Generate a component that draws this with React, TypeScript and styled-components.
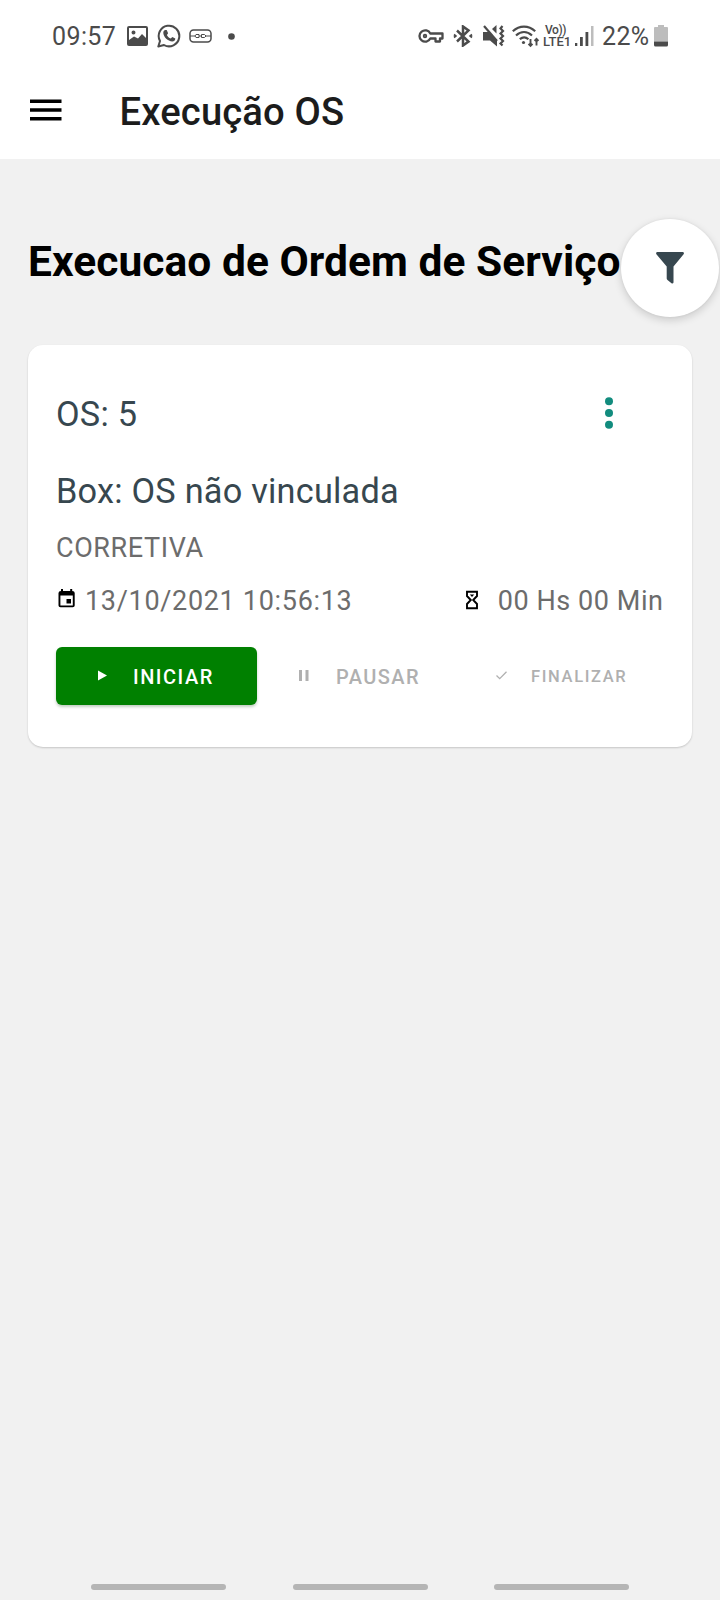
import React from "react";
import styled, { createGlobalStyle } from "styled-components";

const GlobalStyle = createGlobalStyle`
  * { box-sizing: border-box; }
  body { margin: 0; background: #f1f1f1; font-family: Roboto, "Liberation Sans", sans-serif; }
  svg { display: block; flex: none; }
  button { font: inherit; border: 0; background: none; padding: 0; margin: 0; }
`;

const Screen = styled.div`
  width: 720px;
  height: 1600px;
  display: flex;
  flex-direction: column;
  overflow: hidden;
  background: #f1f1f1;
`;

const StatusBar = styled.header`
  height: 72px;
  flex: none;
  display: flex;
  justify-content: space-between;
  align-items: center;
  padding: 0 52px 0 52px;
  background: #fff;
  color: #4b4b4b;
`;

const StatusGroup = styled.div`
  display: flex;
  align-items: center;
`;

const StatusIcon = styled.svg<{ $gap: number }>`
  margin-left: ${(p) => p.$gap}px;
  color: #4b4b4b;
`;

const StatusText = styled.span<{ $gap?: number; $spacing?: number }>`
  margin-left: ${(p) => p.$gap ?? 0}px;
  font-size: 25px;
  line-height: 30px;
  padding-top: 2px;
  letter-spacing: ${(p) => p.$spacing ?? 0}px;
`;

const VolteLabel = styled.div`
  display: flex;
  flex-direction: column;
  width: 27px;
  margin-left: 3px;
  font-size: 13px;
  font-weight: 500;
  line-height: 11px;
  white-space: nowrap;
`;

const VolteTop = styled.span`
  padding-left: 2px;
  font-size: 12px;
  letter-spacing: -0.4px;
`;

const AppBar = styled.div`
  height: 86.5px;
  flex: none;
  display: flex;
  align-items: flex-start;
  padding: 17.5px 30px 0;
  background: #fff;
`;

const MenuButton = styled.button`
  display: flex;
  height: 40px;
  align-items: center;
`;

const AppTitle = styled.h1`
  margin: 0.5px 0 0 57.5px;
  font-size: 38.2px;
  font-weight: 500;
  line-height: 44px;
  letter-spacing: 0.15px;
  color: #1c1c1c;
`;

const PageHeader = styled.div`
  height: 186.5px;
  flex: none;
  display: flex;
  align-items: flex-start;
  padding: 60.5px 0 0 28px;
`;

const PageTitle = styled.h2`
  flex: none;
  width: 593px;
  margin: 18px 0 0;
  font-size: 42.5px;
  font-weight: 700;
  line-height: 50px;
  letter-spacing: 0.05px;
  white-space: nowrap;
  color: #000;
`;

const FilterButton = styled.button`
  display: flex;
  align-items: center;
  justify-content: center;
  flex: none;
  width: 98px;
  height: 98px;
  border-radius: 50%;
  background: #fff;
  box-shadow: 0 3px 8px rgba(0, 0, 0, 0.16), 0 0 3px rgba(0, 0, 0, 0.06);
`;

const OrderCard = styled.article`
  height: 401.5px;
  flex: none;
  margin: 0 28px 0 27.5px;
  padding: 46px 28.5px 0;
  border-radius: 15px;
  background: #fff;
  box-shadow: 0 1px 2px rgba(0, 0, 0, 0.18);
`;

const CardTop = styled.div`
  display: flex;
  justify-content: space-between;
  height: 46px;
  padding-right: 51px;
`;

const CardTitle = styled.div`
  font-size: 34.300px;
  line-height: 46px;
  letter-spacing: 0.22px;
  color: #37474f;
  white-space: nowrap;
`;

const BoxTitle = styled(CardTitle)`
  margin-top: 31px;
`;

const MoreButton = styled.button`
  display: flex;
  width: 8px;
  height: 44px;
  align-items: center;
`;

const OrderKind = styled.div`
  margin-top: 18px;
  font-size: 27px;
  line-height: 32px;
  letter-spacing: 0.6px;
  color: #6c6c6c;
`;

const MetaRow = styled.div`
  display: flex;
  justify-content: space-between;
  align-items: center;
  height: 36px;
  margin-top: 19px;
`;

const MetaItem = styled.div<{ $gap: number; $spacing: number }>`
  display: flex;
  align-items: center;
  gap: ${(p) => p.$gap}px;
  font-size: 27px;
  line-height: 36px;
  letter-spacing: ${(p) => p.$spacing}px;
  color: #6c6c6c;
  white-space: nowrap;
`;

const Actions = styled.div`
  display: flex;
  margin-top: 27.5px;
  height: 58px;
`;

const ActionButton = styled.button<{ $primary?: boolean; $width: number; $pad: number; $gap: number; $size: number; $spacing: number }>`
  display: flex;
  align-items: center;
  width: ${(p) => p.$width}px;
  height: 58px;
  padding-left: ${(p) => p.$pad}px;
  gap: ${(p) => p.$gap}px;
  border-radius: 6px;
  background: ${(p) => (p.$primary ? "#008000" : "transparent")};
  box-shadow: ${(p) => (p.$primary ? "0 2px 3px rgba(0, 60, 0, 0.25)" : "none")};
  color: ${(p) => (p.$primary ? "#fff" : "#b0b0b0")};
  font-size: ${(p) => p.$size}px;
  font-weight: 500;
  letter-spacing: ${(p) => p.$spacing}px;
  white-space: nowrap;
`;

const ActionLabel = styled.span`
  padding-top: 2px;
`;

const GestureBar = styled.footer`
  display: flex;
  justify-content: center;
  gap: 66.5px;
  margin-top: auto;
  padding-bottom: 10px;
`;

const GestureHint = styled.span`
  width: 135px;
  height: 6px;
  border-radius: 3px;
  background: #b5b5b5;
`;

export default function App() {
  return (
    <>
      <GlobalStyle />
      <Screen>
        <StatusBar>
          <StatusGroup>
            <StatusText $spacing={0.4}>09:57</StatusText>
            <StatusIcon $gap={11} width="21" height="20" viewBox="0 0 21 20">
              <path fill="currentColor" fillRule="evenodd" d="M2 0h17a2 2 0 0 1 2 2v16a2 2 0 0 1-2 2H2a2 2 0 0 1-2-2V2a2 2 0 0 1 2-2zM2 2v12l5-3.500 4 2 4-4.500 4 4V2zM6.500 4.500a2 2 0 1 1 0 4 2 2 0 0 1 0-4z" />
            </StatusIcon>
            <StatusIcon $gap={9} width="24" height="24" viewBox="0 0 24 24">
              <path d="M1.300 22.500L3 17A10.300 10.300 0 1 1 7 21z" fill="none" stroke="currentColor" strokeWidth="2" strokeLinejoin="round" />
              <path fill="currentColor" d="M8 6h1.700l1.400 3.200-1.200 1.700c1 1.800 2 2.800 3.900 3.600l1.500-1.600 3 1.500c0 2-1.300 3-3 3-4.500-.4-8.700-4.400-9-8.500C6.200 7.500 7 6.500 8 6z" />
            </StatusIcon>
            <StatusIcon $gap={8} width="23" height="14" viewBox="0 0 23 14" fill="none" stroke="currentColor" strokeWidth="1.500">
              <rect x="1" y="1" width="21" height="12" rx="3.500" />
              <path d="M1 7h5M17 7h5M10 5.500H7L6 7l1 1.500h3zM12.500 5.500h3L17 7l-1.500 1.500h-3zM10 7h2.500" strokeWidth="1" />
            </StatusIcon>
            <StatusIcon $gap={16} width="7" height="7" viewBox="0 0 7 7">
              <circle cx="3.500" cy="3.500" r="3.300" fill="currentColor" />
            </StatusIcon>
          </StatusGroup>
          <StatusGroup>
            <StatusIcon $gap={0} width="26" height="14" viewBox="0 0 26 14" fill="none" stroke="currentColor" strokeWidth="2.300">
              <path d="M12.300 4.500H24.500V9.500H22V12.500H17.500V9.500H12.300A5.700 5.700 0 1 1 12.300 4.500z" strokeLinejoin="round" />
              <circle cx="7" cy="7" r="1.300" strokeWidth="1.800" />
            </StatusIcon>
            <StatusIcon $gap={9} width="20" height="22" viewBox="0 0 20 22" fill="none" stroke="currentColor" strokeWidth="2.500">
              <path d="M4 5.500L15.500 16.500 10 20.500V1.500L15.500 5.500 4 16.500" />
              <path d="M1 9.500l1.800 1.500L1 12.500M19 9.500L17.200 11l1.800 1.500" strokeWidth="1.800" />
            </StatusIcon>
            <StatusIcon $gap={10} width="22" height="22" viewBox="0 0 22 22">
              <path fill="currentColor" d="M0 7h6l8 8v6.500L7 15.500H0zM9 4l4.500-4v8.500z" />
              <path d="M1 1l13 15" stroke="currentColor" strokeWidth="2.200" />
              <path d="M19.500 1l-2 2.500 2.500 2.500-2.500 2.500 2.500 2.500-2.500 2.500 2.500 2.500-2.500 2.500 2 2" fill="none" stroke="currentColor" strokeWidth="2.200" />
            </StatusIcon>
            <StatusIcon $gap={7} width="28" height="23" viewBox="0 0 28 23" fill="none" stroke="currentColor" strokeWidth="2.200">
              <path d="M.8 6.300C7.500 0 16.500 0 23.200 6.300M4 10.500c5-4.600 11-4.600 16 0M7.800 14.200c3-2.500 5.800-2.500 8.600 0" />
              <circle cx="11.500" cy="17.500" r="1.600" fill="currentColor" stroke="none" />
              <path d="M18.500 14v7M16.500 18.800l2 2 2-2M24.500 20.500v-7M22.500 15.800l2-2 2 2" strokeWidth="1.900" />
            </StatusIcon>
            <VolteLabel>
              <VolteTop>Vo))</VolteTop>
              <span>LTE1</span>
            </VolteLabel>
            <StatusIcon $gap={5} width="19" height="20" viewBox="0 0 19 20">
              <path fill="currentColor" d="M0 17h2.300v3H0zM5 11h2.800v9H5zM10.500 6h2.800v14h-2.800z" />
              <path fill="#bdbdbd" d="M16 0h2.500v20H16z" />
            </StatusIcon>
            <StatusText $gap={8} $spacing={0.35}>22%</StatusText>
            <StatusIcon $gap={4.5} width="14" height="22" viewBox="0 0 14 22">
              <path fill="#bdbdbd" d="M4 0h6v2h3q1 0 1 1v13.500H0V3q0-1 1-1h3z" />
              <path fill="currentColor" d="M0 16.500h14V20q0 1.500-1.500 1.500h-11Q0 21.500 0 20z" />
            </StatusIcon>
          </StatusGroup>
        </StatusBar>

        <AppBar>
          <MenuButton aria-label="Menu">
            <svg width="32" height="22" viewBox="0 0 32 22">
              <path d="M0 .5h31.500v3.500H0zM0 9.200h31.500v3.500H0zM0 18h31.500v3.500H0z" />
            </svg>
          </MenuButton>
          <AppTitle>Execução OS</AppTitle>
        </AppBar>

        <PageHeader>
          <PageTitle>Execucao de Ordem de Serviço</PageTitle>
          <FilterButton aria-label="Filtrar">
            <svg width="28" height="32" viewBox="0 0 28 32">
              <path fill="#37474f" d="M1 0h26q1.500.8.6 2.300L17.500 14.500V30.500q-.5 1.400-2 .8l-4-3.300q-.8-.7-.8-1.500V14.500L.4 2.300Q-.4.800 1 0z" />
            </svg>
          </FilterButton>
        </PageHeader>

        <OrderCard>
          <CardTop>
            <CardTitle>OS: 5</CardTitle>
            <MoreButton aria-label="Mais opções">
              <svg width="8" height="32" viewBox="0 0 8 32" fill="#128c7e">
                <circle cx="4" cy="4.200" r="4" />
                <circle cx="4" cy="16" r="4" />
                <circle cx="4" cy="27.800" r="4" />
              </svg>
            </MoreButton>
          </CardTop>
          <BoxTitle>Box: OS não vinculada</BoxTitle>
          <OrderKind>CORRETIVA</OrderKind>
          <MetaRow>
            <MetaItem $gap={9} $spacing={0.68}>
              <svg width="20" height="24" viewBox="-2.500 1 20 24">
                <path fillRule="evenodd" d="M2.500 2V0h2v2h7.200V0h2v2q2.500 0 2.500 2v12.500q0 1.800-2 1.800H2q-2 0-2-1.800V4q0-2 2.500-2zM1.900 6.500v9.900h12.400V6.500zM8 10h4.500v4.500H8z" transform="translate(0 1)" />
              </svg>
              13/10/2021 10:56:13
            </MetaItem>
            <MetaItem $gap={20} $spacing={0.55}>
              <svg width="12" height="22" viewBox="0 1 12 22">
                <path d="M1 2.800h10v4.200L7.200 11 11 15v4.200H1V15l3.800-4L1 7z" fill="none" stroke="#000" strokeWidth="1.900" />
                <path d="M3.800 5.500h4.400L6 8z" />
              </svg>
              00 Hs 00 Min
            </MetaItem>
          </MetaRow>
          <Actions>
            <ActionButton $primary $width={201} $pad={42} $gap={26} $size={20} $spacing={1.5}>
              <svg width="9" height="11" viewBox="0 0 9 11"><path fill="#fff" d="M0 .5l9 5L0 10.500z" /></svg>
              <ActionLabel>INICIAR</ActionLabel>
            </ActionButton>
            <ActionButton disabled $width={197} $pad={42} $gap={27} $size={20} $spacing={1.45}>
              <svg width="10" height="11" viewBox="0 0 10 11"><path fill="#b0b0b0" d="M0 0h3v11H0zM6.500 0h3v11h-3z" /></svg>
              <ActionLabel>PAUSAR</ActionLabel>
            </ActionButton>
            <ActionButton disabled $width={200} $pad={41.5} $gap={24.5} $size={16.5} $spacing={1.65}>
              <svg width="11" height="9" viewBox="0 0 11 9"><path fill="none" stroke="#b0b0b0" strokeWidth="1.300" d="M.5 4.500L3.700 7.700 10.500.8" /></svg>
              <ActionLabel>FINALIZAR</ActionLabel>
            </ActionButton>
          </Actions>
        </OrderCard>

        <GestureBar>
          <GestureHint />
          <GestureHint />
          <GestureHint />
        </GestureBar>
      </Screen>
    </>
  );
}
